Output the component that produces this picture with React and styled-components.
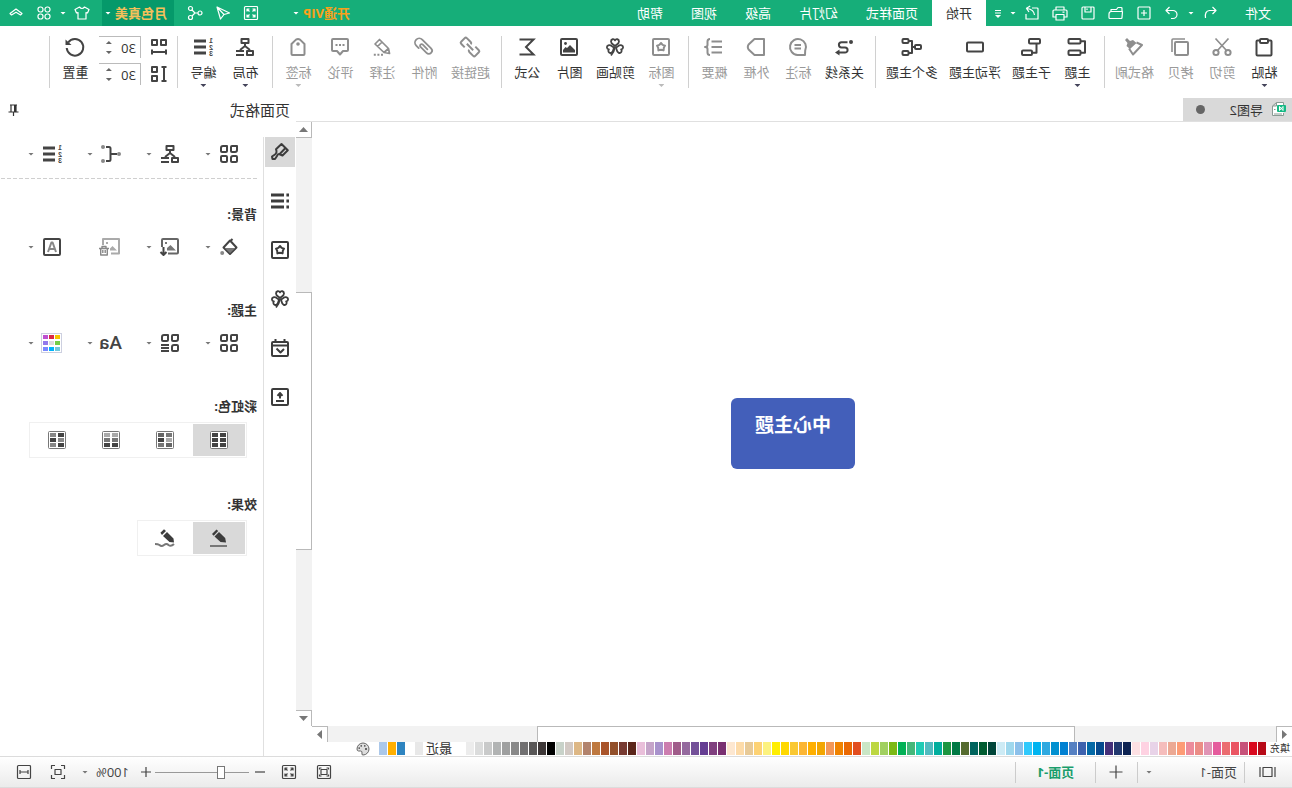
import React from "react";
import styled, { createGlobalStyle, css } from "styled-components";

const INK = "#444444";
const FAINT = "#8e8e8e";
const GREEN = "#16ae79";

const GlobalStyle = createGlobalStyle`
  *, *::before, *::after { box-sizing: border-box; }
  html, body { margin: 0; padding: 0; background: #ffffff; }
  body {
    font-family: "Open Sans", "Noto Sans CJK SC", sans-serif;
    font-size: 13px;
    line-height: 20px;
    color: #333333;
  }
  button, input {
    font: inherit;
    color: inherit;
    margin: 0;
    padding: 0;
    border: 0;
    background: none;
  }
  button { display: inline-flex; align-items: center; justify-content: center; white-space: nowrap; }
`;

/* The whole window is shown as in a mirror */
const Window = styled.div`
  display: flex;
  flex-direction: column;
  width: 100%;
  min-height: 100vh;
  overflow: hidden;
  background: #ffffff;
  transform: scaleX(-1);
`;

/* ---------- drawings ---------- */

const Svg = styled.svg`
  display: block;
  flex: none;
  overflow: visible;
  fill: none;
  stroke: currentColor;
  stroke-width: ${(p) => p.$w};
  stroke-linejoin: round;
`;

const Digits = styled.text`
  font-family: "Liberation Sans", sans-serif;
  font-size: 7px;
  font-weight: 700;
  fill: currentColor;
  stroke: none;
`;

const heart = "M0 -1 C-1.5 -2.5 -4 -3.2 -4 -5.6 C-4 -8 -1 -8.6 0 -6.6 C1 -8.6 4 -8 4 -5.6 C4 -3.2 1.5 -2.5 0 -1 Z";
const flower = "M9 5 L10.6 6.9 L13 7.6 L11.8 9.8 L11.6 12.4 L9 11.8 L6.4 12.4 L6.2 9.8 L5 7.6 L7.4 6.9 Z";
const fill = { fill: "currentColor", stroke: "none" };

const glyphs = {
  paste: (<><rect x="1.5" y="2.5" width="15" height="15" rx="1" /><rect x="5" y="1" width="8" height="4" rx="1" fill="#fff" /></>),
  cut: (<><circle cx="3" cy="14.5" r="2.6" /><circle cx="15" cy="14.5" r="2.6" /><path d="M2.5 0.5 L13.5 12.5 M15.5 0.5 L4.5 12.5" strokeWidth="1.7" /></>),
  copy: (<><rect x="1" y="4" width="13" height="13" rx="1" /><path d="M4 1 H16 Q17 1 17 2 V14" strokeWidth="1.6" /></>),
  brushFill: (<><path d="M16 0 L18 2 L15.5 5 L16.5 8 L13 11 L6.5 5 L10 2 L13 3 Z" {...fill} /><path d="M6.5 4.5 L1 7 L10 16.5 L14 10.5" /></>),
  topic: (<><rect x="5.5" y="1" width="12" height="4.6" rx="1" /><rect x="5.5" y="12.4" width="12" height="4.6" rx="1" /><path d="M5.5 3.3 H1 V14.7 H5.5" /></>),
  subtopic: (<><rect x="0" y="1" width="11" height="4.6" rx="1" /><rect x="8" y="12.4" width="10" height="4.6" rx="1" /><path d="M3.5 6 V14.7 H8" /></>),
  floating: (<rect x="1" y="4.5" width="16" height="9" rx="1" />),
  multi: (<><rect x="0" y="7" width="6" height="4" rx="1" /><rect x="12.5" y="1" width="6" height="4" rx="1" /><rect x="12.5" y="13" width="6" height="4" rx="1" /><path d="M6 9 H9 M12.5 3 H9 V15 H12.5" /></>),
  relation: (<><circle cx="2" cy="4" r="2" {...fill} /><path d="M5.5 4.2 H11.5 A2.6 2.6 0 0 1 11.5 9.4 H8 A2.6 2.6 0 0 0 8 14.6 H15" /><path d="M13.5 11.5 L18 14.6 L13.5 17.5 Z" {...fill} /></>),
  callout: (<><path d="M2 17 L1.8 12.5 A8 8 0 1 1 9.5 17 Z" /><path d="M6 7 H12.5 M6 10.5 H12.5" /></>),
  boundary: (<path d="M2 1 H10.5 L16.4 6.4 Q18 9 16.4 11.6 L10.5 17 H1 V1 Z" />),
  summary: (<><path d="M1 3.5 H11.5 M1 9 H11.5 M1 14.5 H11.5" /><path d="M13 1 Q15.5 1 15.5 3.5 V7 Q15.5 9 18 9 Q15.5 9 15.5 11 V14.5 Q15.5 17 13 17" /></>),
  icon: (<><rect x="1" y="1" width="16" height="16" rx="1" /><path d={flower} /></>),
  clover: (<g transform="translate(9 9)"><path d={heart} /><path d={heart} transform="rotate(-112)" /><path d={heart} transform="rotate(112)" /><path d="M0 0 Q1 5 4 8.5" /></g>),
  picture: (<><rect x="1" y="1" width="16" height="16" rx="1" /><path d="M3 14.5 V12 L8 7 L11 10 L12.5 9 L15 12 V14.5 Z" {...fill} /><circle cx="12.5" cy="5.5" r="1.4" {...fill} /></>),
  sigma: (<path d="M16.5 1.5 H2.5 L10 9 L2.5 16.5 H16.5" strokeLinejoin="miter" />),
  link: (<g transform="rotate(-45 9 9)"><path d="M5.5 5 H0.5 Q-1 5 -1 6.5 V11.5 Q-1 13 .5 13 H6 Q7.5 13 7.5 11.5" /><path d="M12.5 13 H17.5 Q19 13 19 11.5 V6.5 Q19 5 17.5 5 H12 Q10.5 5 10.5 6.5" /><path d="M4.5 9 H13.5" /></g>),
  attach: (<g transform="rotate(45 9 9)"><path d="M13.5 6 V2.5 A4.2 4.2 0 0 0 5 2.5 V15 A3.2 3.2 0 0 0 11.4 15 V6.5 A1.6 1.6 0 0 0 8.2 6.5 V13" strokeLinecap="round" strokeWidth="1.8" /></g>),
  note: (<><path d="M1.5 15.5 L2.5 10.5 L11.5 1.5 L16 6 L7 14.5 Z M9 4 L13.5 8.5 M2.5 10.5 L7 14.5" strokeWidth="1.7" /><path d="M8 16.8 H18" strokeDasharray="2 1.6" /></>),
  comment: (<><path d="M2 1 H16 Q17 1 17 2 V12 Q17 13 16 13 H12 L9 16.5 L6 13 H2 Q1 13 1 12 V2 Q1 1 2 1 Z" /><path d="M4.5 7 H13.5" strokeDasharray="2 1.5" /></>),
  tag: (<><path d="M2.5 16 V6 L7 1.6 Q9 .4 11 1.6 L15.5 6 V16 Q15.5 17 14.5 17 H3.5 Q2.5 17 2.5 16 Z" /><circle cx="9" cy="6" r="1.8" {...fill} /></>),
  layout: (<><rect x="5.5" y="1" width="7" height="4" /><path d="M9 5 V8 M9 8 L4 12 M9 8 L14 12" /><rect x="1" y="13" width="6" height="4" /><path d="M10 13 H18 M10 17 H18" /></>),
  numbering: (<><Digits x="-1" y="5">1</Digits><Digits x="-1" y="11.5">2</Digits><Digits x="-1" y="18">3</Digits><path d="M6 3 H18 M6 9 H18 M6 15 H18" strokeWidth="3" /></>),
  hGap: (<><rect x="2" y="2" width="5" height="5" /><rect x="11" y="2" width="5" height="5" /><path d="M2 14 H16 M2 11.5 V16.5 M16 11.5 V16.5" /></>),
  vGap: (<><rect x="11" y="2" width="5" height="5" /><rect x="11" y="11" width="5" height="5" /><path d="M4 2 V16 M1.5 2 H6.5 M1.5 16 H6.5" /></>),
  reset: (<><path d="M15.8 4.5 A8.3 8.3 0 1 0 17.3 10" /><path d="M18.5 1.5 V7 H12.5 Z" {...fill} /></>),

  undo: (<path d="M5.5 2 L2 5.5 L5.5 9 M2 5.5 H8.5 Q13.5 6 12.5 13" />),
  redo: (<path d="M10.5 2 L14 5.5 L10.5 9 M14 5.5 H7 A4 4 0 0 0 7 13.5 H9" />),
  plusBox: (<><rect x="2" y="2" width="12" height="12" rx="1" /><path d="M8 5 V11 M5 8 H11" /></>),
  folder: (<path d="M2 6.5 V3.5 Q2 2.5 3 2.5 H6 L7.5 4.5 H13 V6.5 M1.5 6.5 H12.5 Q15 6.5 15 9 V12.5 Q15 13.5 14 13.5 H3 Q2 13.5 2 12.5 Z" />),
  save: (<path d="M3 2 H13 Q14 2 14 3 V13 Q14 14 13 14 H3 Q2 14 2 13 V3 Q2 2 3 2 Z M5 2 V7 H11 V2 M9 3.5 V5" />),
  print: (<path d="M4 5 V2 H12 V5 M4 12 H1 V6 Q1 5 2 5 H14 Q15 5 15 6 V12 H12 M4 9.5 H12 V15 H4 Z M3.5 7.2 H5.5" />),
  exportDoc: (<path d="M8 3 H3 Q2 3 2 4 V14 H14 V9 M5.5 10 Q6 4.5 13 3.5 M9.8 1 L13.5 3.3 L11 7" />),
  expand: (<><rect x="1.5" y="1.5" width="13" height="13" rx="1" /><path d="M4 6.5 V4 H6.5 M9.5 4 H12 V6.5 M12 9.5 V12 H9.5 M6.5 12 H4 V9.5 M4 4 L6.5 6.5 M12 4 L9.5 6.5 M12 12 L9.5 9.5 M4 12 L6.5 9.5" /></>),
  cursor: (<path d="M14 2 L1.5 8 L7 9.5 L10.5 14 Z M14 2 L7 9.5" />),
  share: (<><circle cx="12.5" cy="3.5" r="2" /><circle cx="3" cy="8" r="2" /><circle cx="12.5" cy="12.5" r="2" /><path d="M5 8 H8 L11 5 M8 8 L11 11" /></>),
  shirt: (<path d="M5.5 2 Q8 5 10.5 2 L15 4.5 L13.5 8 L12 7.5 V14 H4 V7.5 L2.5 8 L1 4.5 Z" />),
  petals: (<><rect x="2" y="2" width="5" height="5" rx="2.2" /><rect x="9" y="2" width="5" height="5" rx="2.2" /><rect x="2" y="9" width="5" height="5" rx="2.2" /><rect x="9" y="9" width="5" height="5" rx="2.2" /></>),
  collapse: (<path d="M2 8.5 L8 4 L14 8.5 L12.5 10 L8 7.2 L3.5 10 Z" />),
  more: (<><path d="M4 4.5 H10 M4 7 H10" /><path d="M4 9 H10 L7 12 Z" {...fill} /></>),

  pin: (<><path d="M2 0 H9 M3 0 V7 M8 0 V7 M0.5 7 H10.5 M5.5 7 V11" /><path d="M3 0 H5 V7 H3 Z" {...fill} /></>),
  squares: (<path d="M1 1 H6 Q7 1 7 2 V6 Q7 7 6 7 H3 Q1 7 1 5 Z M11 1 H15 Q17 1 17 3 V6 Q17 7 16 7 H12 Q11 7 11 6 Z M1 12 Q1 11 2 11 H5 Q7 11 7 13 V16 Q7 17 6 17 H2 Q1 17 1 16 Z M12 11 H16 Q17 11 17 12 V15 Q17 17 15 17 H12 Q11 17 11 16 V12 Q11 11 12 11 Z" />),
  squaresLines: (<><path d="M1 1 H6 Q7 1 7 2 V6 Q7 7 6 7 H3 Q1 7 1 5 Z M11 1 H15 Q17 1 17 3 V6 Q17 7 16 7 H12 Q11 7 11 6 Z M1 12 Q1 11 2 11 H5 Q7 11 7 13 V16 Q7 17 6 17 H2 Q1 17 1 16 Z" /><path d="M10 11 H18 M10 14 H18 M10 17 H18" /></>),
  structure: (<><circle cx="1" cy="9" r="2" fill="#888" stroke="none" /><path d="M3 9 H9 M14 2 H11 Q9.5 2 9.5 3.5 V14.5 Q9.5 16 11 16 H14" /><circle cx="17" cy="2" r="2" fill="#888" stroke="none" /><circle cx="17" cy="16" r="2" fill="#888" stroke="none" /></>),
  bucket: (<><path d="M8 2.5 L14.5 9.5 L8 16 L1.5 9.5 Z M8 3.5 L5.5 1" /><path d="M3 10 H13 L8 15 Z" fill="#777" stroke="none" /><circle cx="15.8" cy="15" r="2" fill="#888" stroke="none" /></>),
  imageDown: (<><path d="M11 15.5 H2 Q1 15.5 1 14.5 V2 Q1 1 2 1 H16 Q17 1 17 2 V9" stroke="#666" /><path d="M3 12.5 L8.5 7 L12 10 V12.5 Z M12 4 H14 V6 H12 Z" fill="#777" stroke="none" /><path d="M15.5 9 V17 M12.5 14 L15.5 17 L18.5 14" /></>),
  imageTrash: (<><path d="M9 15.5 H1 V1 H17 V7" /><path d="M3 12.5 L7.5 8 L10 10.5 V12.5 Z M12 4 H14 V6 H12 Z" fill="#aaa" stroke="none" /><path d="M11 10.5 H21 M14 10 V8.5 H18 V10 M12.7 10 V17 H19.3 V10 M14.8 12 V15 M17.2 12 V15" stroke="#888" strokeWidth="1.4" /></>),
  letterBox: (<><rect x="1" y="1" width="16" height="16" rx="1" /><path d="M5 14 L8.4 4.5 H9.6 L13 14 M6.5 11 H11.5" stroke="#888" /></>),
  brush: (<path d="M7.5 1 L1.2 7.2 L6.5 12.5 L10 11 Q11.5 11 12 13 L14 16 L16.5 16 L17 13.5 L14 11.5 Q12 10 12.5 8 L13 6.2 Z M3.5 5 L9.5 11.2" />),
  list: (<path d="M0 3 H2.6 M0 9 H2.6 M0 15 H2.6 M5 3 H18 M5 9 H18 M5 15 H18" strokeWidth="3" />),
  calendar: (<path d="M2 3 H16 Q17 3 17 4 V16 Q17 17 16 17 H2 Q1 17 1 16 V4 Q1 3 2 3 Z M1 6.5 H17 M4.5 0 V4 M13.5 0 V4 M5 10 L8.5 13.5 L12.5 9.5" />),
  upload: (<><rect x="1" y="1" width="16" height="16" rx="1" /><path d="M5 13 H13 M9 10.5 V5 M6.5 7.8 L9 5 L11.5 7.8" /></>),
  penLine: (<><path d="M2 13.5 L2.8 9 L9 3 L13.5 7.5 L7.5 13 Z" {...fill} /><path d="M9.8 2 L11.5 .5 L16 5 L14.3 6.7 Z" {...fill} /><path d="M1 17 H18" stroke="#777" /></>),
  pencilWave: (<><path d="M0 13.5 L.5 9.5 L7 3 L11 7 L4.5 13 Z M8 2 L10 .3 L13.6 3.8 L12 6 Z" {...fill} /><path d="M0 15 Q3 18 5.5 16 Q7.5 14 10 16 Q12.5 18 14.5 16 Q16 15 19 15" stroke="#777" /></>),

  slide: (<><rect x="4" y="3.5" width="9" height="9" /><path d="M1 3 V13 M16 3 V13" /></>),
  fitPage: (<><rect x="1.5" y="1.5" width="13" height="13" rx="1" /><rect x="5" y="5.5" width="6" height="5" /><path d="M3.5 5.5 V4 H5.5 M10.5 4 H12.5 V5.5 M12.5 10.5 V12 H10.5 M5.5 12 H3.5 V10.5" /></>),
  focus: (<><rect x="5" y="5.5" width="6" height="5" /><path d="M1.5 5 V1.5 H5 M11 1.5 H14.5 V5 M14.5 11 V14.5 H11 M5 14.5 H1.5 V11" /></>),
  fitWidth: (<><rect x="1.5" y="1.5" width="13" height="13" rx="1" /><path d="M4 8 H12 M4 6 V10 M12 6 V10" /></>),
  plus: (<path d="M8 1.5 V14.5 M1.5 8 H14.5" />),
  zoomIn: (<path d="M8 3 V13 M3 8 H13" />),
  zoomOut: (<path d="M3 8 H13" />),
  palette: (<><path d="M8 2 A6 6 0 1 0 8 14 Q9.6 14 9 12 Q8.6 10 10.5 10 H12.5 Q14 10 14 8 A6 6 0 0 0 8 2 Z" fill="#ddd" /><path d="M4 8 H6 M5.5 4.8 H7 M9 4.8 H10.5 M11 7.2 H12.5" strokeWidth="1.8" /></>),
};

const Icon = ({ name, size = 18, w = 2 }) => (
  <Svg width={size} height={size} viewBox={`0 0 ${size} ${size}`} $w={w} aria-hidden="true">{glyphs[name]}</Svg>
);

const Caret = styled.span`
  flex: none;
  width: 6px;
  height: 3px;
  background: ${(p) => p.$color || "#777777"};
  clip-path: ${(p) => (p.$up ? "polygon(50% 0, 100% 100%, 0 100%)" : "polygon(0 0, 100% 0, 50% 100%)")};
`;

/* ---------- title bar ---------- */

const TitleBar = styled.header`
  display: flex;
  align-items: stretch;
  height: 26px;
  padding-right: 2px;
  background: ${GREEN};
  color: #ffffff;
`;
const FileButton = styled.button`width: 68px;`;
const TitleButton = styled.button`width: 28px;`;
const CaretButton = styled.button`width: 10px;`;
const MoreButton = styled.button`width: 20px;`;
const Tabs = styled.nav`
  display: flex;
  margin-left: 2px;
`;
const Tab = styled.button`
  padding: 0 14px;
  ${(p) => p.$active && css`background: #ffffff; color: #333333;`}
`;
const Account = styled.div`
  display: flex;
  margin-left: auto;
`;
const VipButton = styled.button`
  gap: 4px;
  margin-right: 28px;
  color: #f9a11b;
  font-weight: 700;
`;
const UserButton = styled.button`
  gap: 4px;
  margin: 0 6px 0 7px;
  padding: 0 3px 0 7px;
  background: #05996a;
  color: #f5c05a;
  font-weight: 700;
`;

/* ---------- ribbon ---------- */

const Ribbon = styled.div`
  display: flex;
  height: 72px;
  padding: 10px 0 10px 6px;
`;
const Separator = styled.span`
  flex: none;
  width: 1px;
  height: 52px;
  margin: 0 5px;
  background: #d0d0d0;
`;
const RibbonButton = styled.button`
  flex: none;
  flex-direction: column;
  justify-content: flex-start;
  min-width: 42px;
  padding: 2px 5px 0 6px;
  color: ${(p) => (p.$faint ? FAINT : INK)};
`;
const RibbonLabel = styled.span`
  margin: 6px 0 2px;
  color: ${(p) => (p.$faint ? "#9a9a9a" : "#333333")};
`;
const Spacing = styled.div`
  display: grid;
  align-content: start;
  gap: 5px;
  margin: 0 2px 0 4px;
`;
const SpacingField = styled.label`
  display: flex;
  align-items: center;
  gap: 9px;
  height: 22px;
  color: ${INK};
`;
const SpinBox = styled.span`
  display: flex;
  align-items: center;
  width: 42px;
  height: 22px;
  border: solid #bbbbbb;
  border-width: 1px 0 0 1px;
`;
const SpinInput = styled.input`
  width: 28px;
  padding-left: 4px;
  color: #333333;
`;
const SpinArrows = styled.span`
  display: grid;
  gap: 7px;
`;

/* ---------- workspace ---------- */

const Workspace = styled.div`
  flex: 1;
  display: grid;
  grid-template-columns: minmax(0, 1fr) 296px;
`;
const Editor = styled.main`
  display: flex;
  flex-direction: column;
  min-width: 0;
`;
const DocBar = styled.div`
  display: flex;
  height: 24px;
  border-bottom: 1px solid #e0e0e0;
`;
const DocTab = styled.button`
  justify-content: flex-start;
  width: 109px;
  padding: 0 13px 0 6px;
  background: #d9d9d9;
`;
const DocName = styled.span`margin-left: 8px;`;
const Unsaved = styled.span`
  width: 9px;
  height: 9px;
  margin-left: auto;
  border-radius: 50%;
  background: #666666;
`;
const CanvasRow = styled.div`
  flex: 1;
  display: flex;
`;
const Canvas = styled.div`
  position: relative;
  flex: 1;
`;
const CentralTopic = styled.div`
  position: absolute;
  left: 437px;
  top: 276px;
  width: 124px;
  height: 71px;
  padding: 13px 0;
  border-radius: 6px;
  background: #435fba;
  color: #ffffff;
  font-size: 19px;
  line-height: 28px;
  font-weight: 700;
  text-align: center;
`;
const VScroll = styled.div`
  display: flex;
  flex-direction: column;
  width: 16px;
  background: #f2f2f2;
`;
const HScroll = styled.div`
  display: flex;
  height: 16px;
  margin-right: 16px;
  background: #f2f2f2;
`;
const ScrollEnd = styled.button`
  flex: none;
  width: 16px;
  height: 16px;
  border: solid #b9b9b9;
  border-width: ${(p) => p.$edge};
  background: #ffffff;
`;
const Arrow = styled.span`
  width: ${(p) => (p.$side ? 5 : 9)}px;
  height: ${(p) => (p.$side ? 9 : 5)}px;
  background: #777777;
  clip-path: polygon(${(p) => p.$shape});
`;
const VThumb = styled.div`
  flex: 256;
  border: solid #b9b9b9;
  border-width: 1px 0 1px 1px;
  background: #ffffff;
`;
const HThumb = styled.div`
  flex: 538;
  border: solid #b9b9b9;
  border-width: 1px 1px 0;
  background: #ffffff;
`;
const Track = styled.div`flex: ${(p) => p.$grow};`;

const PaletteRow = styled.div`
  display: flex;
  align-items: center;
  gap: 1px;
  height: 14px;
  padding: 0 0 1px 2px;
  white-space: nowrap;
`;
const PaletteLabel = styled.span`
  width: 23px;
  font-size: 10px;
  line-height: 13px;
`;
const RecentLabel = styled.span`
  margin: 0 2px 0 13px;
  line-height: 13px;
`;
const Swatch = styled.button`
  flex: none;
  width: 8px;
  height: 13px;
  background: ${(p) => p.$color};
`;
const PaletteButton = styled.button`
  width: 16px;
  height: 13px;
  margin-left: 7px;
  color: #666666;
`;

/* ---------- side panel ---------- */

const Sidebar = styled.aside`
  display: flex;
  flex-direction: column;
`;
const PanelHead = styled.div`
  display: flex;
  align-items: center;
  justify-content: space-between;
  height: 24px;
  margin-bottom: 15px;
  padding: 0 8px 0 6px;
`;
const PanelTitle = styled.h2`
  margin: 0;
  font-size: 15px;
  font-weight: 400;
  line-height: 24px;
`;
const PanelBody = styled.div`
  flex: 1;
  display: flex;
`;
const ToolColumn = styled.div`
  display: flex;
  flex-direction: column;
  gap: 19px;
  width: 32px;
  padding: 0 1px;
`;
const ToolButton = styled.button`
  width: 30px;
  height: 30px;
  color: #3c3c3c;
  background: ${(p) => (p.$active ? "#d9d9d9" : "transparent")};
`;
const Panel = styled.div`
  flex: 1;
  padding-left: 6px;
  border-left: 1px solid #e0e0e0;
`;
const IconRow = styled.div`
  display: flex;
  height: 34px;
`;
const DropButton = styled.button`
  justify-content: flex-start;
  gap: 9px;
  width: 59px;
  padding-left: 19px;
  color: ${(p) => (p.$faint ? "#aaaaaa" : INK)};
`;
const Divider = styled.hr`
  height: 1px;
  margin: 7px 0 -11px;
  border: 0;
  background: repeating-linear-gradient(90deg, #cfcfcf 0 4px, transparent 4px 6px);
`;
const Section = styled.section`margin-top: 36px;`;
const SectionTitle = styled.h3`
  margin: 0 0 6px;
  font-size: 13px;
  font-weight: 700;
  line-height: 20px;
`;
const Segments = styled.div`
  display: flex;
  gap: 2px;
  width: max-content;
  margin-left: 10px;
  padding: 1px;
  border: 1px solid #f0f0f0;
`;
const Segment = styled.button`
  width: 52px;
  height: 32px;
  color: #3c3c3c;
  background: ${(p) => (p.$active ? "#d9d9d9" : "transparent")};
`;
const ColorGrid = styled.span`
  display: grid;
  grid-template-columns: repeat(3, 5px);
  grid-auto-rows: 4px;
  gap: 2px 1px;
  flex: none;
  margin: 0 -2px 0 -1px;
  padding: 1px;
  border: 1px solid #cdd0e0;
`;
const Chip = styled.span`background: ${(p) => p.$color};`;
const FontSample = styled.span`
  width: 22px;
  margin: 0 -2px;
  font-family: Roboto, sans-serif;
  font-size: 19px;
  font-weight: 500;
`;

/* ---------- status bar ---------- */

const StatusBar = styled.footer`
  display: flex;
  align-items: center;
  height: 32px;
  border: solid #dcdcdc;
  border-width: 1px 0;
  background: linear-gradient(#ffffff, #ebebeb);
  color: ${INK};
`;
const StatusLine = styled.span`
  width: 1px;
  height: 21px;
  background: #cccccc;
`;
const StatusButton = styled.button`
  width: ${(p) => p.$width}px;
  height: 28px;
`;
const PageSelect = styled.button`
  justify-content: space-between;
  width: 106px;
  padding: 0 8px 0 7px;
`;
const PageTab = styled.button`
  width: 79px;
  color: #1a9e6c;
  font-weight: 700;
`;
const Zoom = styled.div`
  display: flex;
  align-items: center;
  margin-left: auto;
  padding-right: 7px;
`;
const ZoomSlider = styled.input`
  appearance: none;
  width: 94px;
  height: 13px;
  &::-webkit-slider-runnable-track {
    height: 13px;
    background: linear-gradient(#999999, #999999) center / 100% 1px no-repeat;
  }
  &::-webkit-slider-thumb {
    appearance: none;
    width: 8px;
    height: 13px;
    border: 1px solid #777777;
    background: #ffffff;
  }
`;
const ZoomValue = styled.button`
  gap: 8px;
  margin: 0 6px 0 8px;
`;

/* ---------- data ---------- */

const tabs = ["开始", "页面样式", "幻灯片", "高级", "视图", "帮助"];

const quickTools = [
  ["plusBox", "新建"], ["folder", "打开"], ["save", "保存"], ["print", "打印"], ["exportDoc", "导出"],
];

const ribbon = [
  [
    { icon: "paste", label: "粘贴", drop: true },
    { icon: "cut", label: "剪切", faint: true },
    { icon: "copy", label: "拷贝", faint: true },
    { icon: "brushFill", label: "格式刷", faint: true },
  ],
  [
    { icon: "topic", label: "主题", drop: true },
    { icon: "subtopic", label: "子主题" },
    { icon: "floating", label: "浮动主题" },
    { icon: "multi", label: "多个主题" },
  ],
  [
    { icon: "relation", label: "关系线" },
    { icon: "callout", label: "标注", faint: true },
    { icon: "boundary", label: "外框", faint: true },
    { icon: "summary", label: "概要", faint: true },
  ],
  [
    { icon: "icon", label: "图标", faint: true, drop: true },
    { icon: "clover", label: "剪贴画" },
    { icon: "picture", label: "图片" },
    { icon: "sigma", label: "公式" },
  ],
  [
    { icon: "link", label: "超链接", faint: true },
    { icon: "attach", label: "附件", faint: true },
    { icon: "note", label: "注释", faint: true },
    { icon: "comment", label: "评论", faint: true },
    { icon: "tag", label: "标签", faint: true, drop: true },
  ],
  [
    { icon: "layout", label: "布局", drop: true },
    { icon: "numbering", label: "编号", drop: true },
  ],
];

const swatches = (
  "B70A18 D9091E C7527A EA5563 EB6D71 E55C9D E094B5 EB8D86 EC8C9C FD9C76 ECA994 F5BDBC E8D3E8 FED2E2 FDE0E3 " +
  "0D2352 22396F 45307A 054A8E 0469A6 3E62AE 5580C2 0080D2 0290D0 2FA9E0 00B4F0 30C9FC 8CC0EA 9FD8ED CDEBF5 " +
  "00463A 005C31 01655E 556B2F 017A45 1D9641 01AE9E 51BBC0 1FCBB4 44B77A 02B156 7CB915 A1D060 BDD742 CAE6C6 " +
  "E24E20 EA6903 F08300 F39757 F2A602 FFAF00 FCB634 FAC832 FFD800 FFEE00 FCF27F FDD274 E8CA97 FDDBA9 FDE7D0 " +
  "7A3071 80407F 663E93 745199 956A9E A05C8A CC7DAF A892CC C5A4C9 E9BFDA " +
  "5B261A 783B32 93502B A9542A BE783F B2836D DDB785 D2C9C4 C8D2C9 " +
  "000000 3E3838 595757 717071 898989 9FA0A0 B2B4B4 C9CACA DBDCDC ECECEC"
).split(" ");
const recent = ["E8E8E8", "FFFFFF", "2E84C0", "FFAF00", "ABC8EA"];

const sideTools = [
  ["brush", "格式"], ["list", "大纲"], ["icon", "图标"], ["clover", "剪贴画"], ["calendar", "任务"], ["upload", "导出"],
];

const rainbow = [
  ["444", "444", "444", "444", "444", "444"],
  ["777", "666", "aaa", "444", "666", "777"],
  ["aaa", "aaa", "777", "777", "444", "444"],
  ["444", "888", "888", "444", "444", "888"],
];
const themeColors = ["f5c400", "dc2846", "be50d0", "73cd46", "dcdcdc", "9178eb", "6ec8dc", "00b4fa", "7887ff"];

/* ---------- parts ---------- */

const PanelDrop = ({ icon, label }) => (
  <DropButton aria-label={label}><Icon name={icon} /><Caret /></DropButton>
);

const RainbowIcon = ({ cells }) => (
  <Svg width="18" height="18" viewBox="0 0 18 18" $w={1} aria-hidden="true">
    <rect x=".5" y=".5" width="17" height="17" rx="1" stroke="#777" fill="#fff" />
    {cells.map((c, i) => (
      <rect key={i} x={i % 2 ? 10 : 2} y={2 + Math.floor(i / 2) * 5} width="6" height="4" fill={`#${c}`} stroke="none" />
    ))}
  </Svg>
);

const DocIcon = () => (
  <Svg width="15" height="15" viewBox="0 0 15 15" $w={1} aria-hidden="true">
    <path d="M2.5 3 V.5 H9.5 L13.5 4 V13.5 H2.5 V11 M9.5 .5 V4 H13.5 M10.5 7.5 H12 M4 12 H12" stroke="#8a9a94" fill="#fff" />
    <rect x="0" y="3" width="9" height="7" rx="1" fill="#14b984" stroke="none" />
    <path d="M3 4.5 V8.5 L6.5 4.5 V8.5 M3 4.5 L6.5 8.5" stroke="#fff" />
  </Svg>
);

const SpinField = ({ icon, label }) => (
  <SpacingField>
    <Icon name={icon} />
    <SpinBox>
      <SpinInput type="text" defaultValue="30" aria-label={label} />
      <SpinArrows><Caret $up $color="#666666" /><Caret $color="#666666" /></SpinArrows>
    </SpinBox>
  </SpacingField>
);

export default function App() {
  return (
    <>
      <GlobalStyle />
      <Window>
        <TitleBar>
          <FileButton>文件</FileButton>
          <TitleButton aria-label="撤销"><Icon name="undo" size={16} w={1.2} /></TitleButton>
          <CaretButton aria-label="撤销历史"><Caret $color="#ffffff" /></CaretButton>
          <TitleButton aria-label="重做"><Icon name="redo" size={16} w={1.2} /></TitleButton>
          {quickTools.map(([icon, label]) => (
            <TitleButton key={icon} aria-label={label}><Icon name={icon} size={16} w={1.2} /></TitleButton>
          ))}
          <CaretButton aria-label="导出选项"><Caret $color="#ffffff" /></CaretButton>
          <MoreButton aria-label="自定义工具栏"><Icon name="more" size={14} w={1.2} /></MoreButton>
          <Tabs>
            {tabs.map((t, i) => <Tab key={t} $active={i === 0}>{t}</Tab>)}
          </Tabs>
          <Account>
            <VipButton>开通VIP<Caret $color="#ffffff" /></VipButton>
            <TitleButton aria-label="全屏"><Icon name="expand" size={16} w={1.2} /></TitleButton>
            <TitleButton aria-label="发送"><Icon name="cursor" size={16} w={1.2} /></TitleButton>
            <TitleButton aria-label="分享"><Icon name="share" size={16} w={1.2} /></TitleButton>
            <UserButton>月色真美<Caret $color="#ffffff" /></UserButton>
            <TitleButton aria-label="皮肤"><Icon name="shirt" size={16} w={1.2} /></TitleButton>
            <CaretButton aria-label="皮肤选项"><Caret $color="#ffffff" /></CaretButton>
            <TitleButton aria-label="应用"><Icon name="petals" size={16} w={1.2} /></TitleButton>
            <TitleButton aria-label="收起功能区"><Icon name="collapse" size={16} w={1.2} /></TitleButton>
          </Account>
        </TitleBar>

        <Ribbon>
          {ribbon.map((group, g) => (
            <React.Fragment key={g}>
              {group.map((b) => (
                <RibbonButton key={b.label} $faint={b.faint}>
                  <Icon name={b.icon} w={b.icon === "clover" ? 1.8 : 2} />
                  <RibbonLabel $faint={b.faint}>{b.label}</RibbonLabel>
                  {b.drop && <Caret $color={b.faint ? "#bbbbbb" : "#44445a"} />}
                </RibbonButton>
              ))}
              <Separator />
            </React.Fragment>
          ))}
          <Spacing>
            <SpinField icon="hGap" label="水平间距" />
            <SpinField icon="vGap" label="垂直间距" />
          </Spacing>
          <RibbonButton>
            <Icon name="reset" />
            <RibbonLabel>重置</RibbonLabel>
          </RibbonButton>
          <Separator />
        </Ribbon>

        <Workspace>
          <Editor>
            <DocBar>
              <DocTab><DocIcon /><DocName>导图2</DocName><Unsaved /></DocTab>
            </DocBar>
            <CanvasRow>
              <Canvas><CentralTopic>中心主题</CentralTopic></Canvas>
              <VScroll>
                <ScrollEnd aria-label="向上" $edge="0 0 1px 1px"><Arrow $shape="50% 0, 100% 100%, 0 100%" /></ScrollEnd>
                <Track $grow={155} />
                <VThumb />
                <Track $grow={161} />
                <ScrollEnd aria-label="向下" $edge="1px 0 0 1px"><Arrow $shape="0 0, 100% 0, 50% 100%" /></ScrollEnd>
              </VScroll>
            </CanvasRow>
            <HScroll>
              <ScrollEnd aria-label="向左" $edge="1px 1px 0 0"><Arrow $side $shape="0 50%, 100% 0, 100% 100%" /></ScrollEnd>
              <Track $grow={201} />
              <HThumb />
              <Track $grow={209} />
              <ScrollEnd aria-label="向右" $edge="1px 0 0 1px"><Arrow $side $shape="0 0, 100% 50%, 0 100%" /></ScrollEnd>
            </HScroll>
            <PaletteRow>
              <PaletteLabel>填充</PaletteLabel>
              {swatches.map((c) => <Swatch key={c} $color={`#${c}`} aria-label={`#${c}`} />)}
              <RecentLabel>最近</RecentLabel>
              {recent.map((c) => <Swatch key={c} $color={`#${c}`} aria-label={`#${c}`} />)}
              <PaletteButton aria-label="更多颜色"><Icon name="palette" size={16} w={1} /></PaletteButton>
            </PaletteRow>
          </Editor>

          <Sidebar>
            <PanelHead>
              <PanelTitle>页面格式</PanelTitle>
              <button aria-label="固定面板"><Icon name="pin" size={11} w={1.2} /></button>
            </PanelHead>
            <PanelBody>
              <ToolColumn>
                {sideTools.map(([icon, label], i) => (
                  <ToolButton key={label} $active={i === 0} aria-label={label}>
                    <Icon name={icon} w={icon === "clover" ? 1.8 : 2} />
                  </ToolButton>
                ))}
              </ToolColumn>
              <Panel>
                <IconRow>
                  <PanelDrop icon="squares" label="布局样式" />
                  <PanelDrop icon="layout" label="布局" />
                  <PanelDrop icon="structure" label="连接线" />
                  <PanelDrop icon="numbering" label="编号" />
                </IconRow>
                <Divider />
                <Section>
                  <SectionTitle>背景:</SectionTitle>
                  <IconRow>
                    <PanelDrop icon="bucket" label="填充背景" />
                    <PanelDrop icon="imageDown" label="插入背景图片" />
                    <DropButton $faint aria-label="移除背景图片"><Icon name="imageTrash" /></DropButton>
                    <PanelDrop icon="letterBox" label="水印" />
                  </IconRow>
                </Section>
                <Section>
                  <SectionTitle>主题:</SectionTitle>
                  <IconRow>
                    <PanelDrop icon="squares" label="主题样式" />
                    <PanelDrop icon="squaresLines" label="主题列表" />
                    <DropButton><FontSample>Aa</FontSample><Caret /></DropButton>
                    <DropButton aria-label="主题颜色">
                      <ColorGrid>{themeColors.map((c) => <Chip key={c} $color={`#${c}`} />)}</ColorGrid>
                      <Caret />
                    </DropButton>
                  </IconRow>
                </Section>
                <Section>
                  <SectionTitle>彩虹色:</SectionTitle>
                  <Segments>
                    {rainbow.map((cells, i) => (
                      <Segment key={i} $active={i === 0} aria-label={`彩虹色 ${i + 1}`}><RainbowIcon cells={cells} /></Segment>
                    ))}
                  </Segments>
                </Section>
                <Section>
                  <SectionTitle>效果:</SectionTitle>
                  <Segments>
                    <Segment $active aria-label="标准"><Icon name="penLine" /></Segment>
                    <Segment aria-label="手绘"><Icon name="pencilWave" /></Segment>
                  </Segments>
                </Section>
              </Panel>
            </PanelBody>
          </Sidebar>
        </Workspace>

        <StatusBar>
          <StatusButton $width={47} aria-label="页面视图"><Icon name="slide" size={16} w={1.2} /></StatusButton>
          <StatusLine />
          <PageSelect>页面-1<Caret /></PageSelect>
          <StatusLine />
          <StatusButton $width={41} aria-label="新建页面"><Icon name="plus" size={16} w={1.2} /></StatusButton>
          <StatusLine />
          <PageTab>页面-1</PageTab>
          <StatusLine />
          <Zoom>
            <StatusButton $width={35} aria-label="适合页面"><Icon name="fitPage" size={16} w={1.2} /></StatusButton>
            <StatusButton $width={35} aria-label="全屏"><Icon name="expand" size={16} w={1.2} /></StatusButton>
            <StatusButton $width={22} aria-label="缩小"><Icon name="zoomOut" size={16} w={1.2} /></StatusButton>
            <ZoomSlider type="range" min="0" max="100" defaultValue="28" aria-label="缩放" />
            <StatusButton $width={18} aria-label="放大"><Icon name="zoomIn" size={16} w={1.2} /></StatusButton>
            <ZoomValue>100%<Caret /></ZoomValue>
            <StatusButton $width={35} aria-label="聚焦"><Icon name="focus" size={16} w={1.2} /></StatusButton>
            <StatusButton $width={34} aria-label="适合宽度"><Icon name="fitWidth" size={16} w={1.2} /></StatusButton>
          </Zoom>
        </StatusBar>
      </Window>
    </>
  );
}
